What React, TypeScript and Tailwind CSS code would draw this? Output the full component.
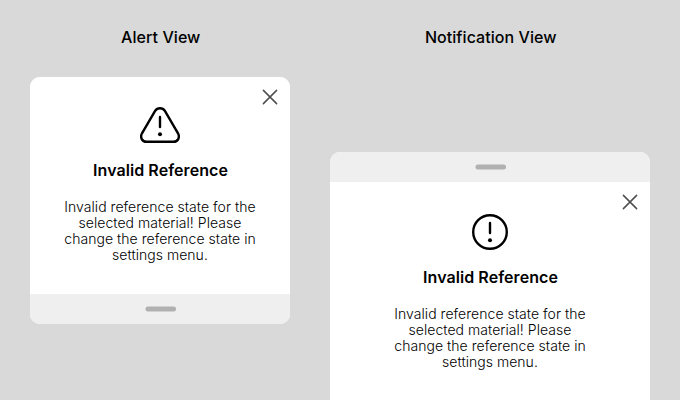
import React from "react";

function CloseIcon() {
  return (
    <svg width="16" height="16" viewBox="0 0 16 16" fill="none" stroke="#4d4d4d" strokeWidth="1.5" strokeLinecap="round">
      <path d="M1.4 1.4L14.6 14.6M14.6 1.4L1.4 14.6" />
    </svg>
  );
}

function WarningIcon() {
  return (
    <svg width="40" height="36" viewBox="0 0 40 36" fill="none" stroke="#000" strokeWidth="2.4" strokeLinecap="round">
      <path d="M15.1 3.9C17.4 0.3 22.6 0.3 24.9 3.9L38 26.3C40.1 30.4 38 34.8 33.5 34.8H6.5C2 34.8 -0.1 30.4 2 26.3Z" />
      <path d="M20 10V20" />
      <circle cx="20" cy="27.3" r="2" fill="#000" stroke="none" />
    </svg>
  );
}

function InfoIcon() {
  return (
    <svg width="36" height="36" viewBox="0 0 36 36" fill="none" stroke="#000" strokeWidth="2.4" strokeLinecap="round">
      <circle cx="18" cy="18" r="16.8" />
      <path d="M18 9V19" />
      <circle cx="18" cy="26.3" r="2" fill="#000" stroke="none" />
    </svg>
  );
}

function Handle() {
  return (
    <div className="flex h-[30px] items-center justify-center bg-[#efefef]">
      <svg width="32" height="6" viewBox="0 0 32 6" className="ml-px">
        <rect x="0.5" y="0.6" width="30.5" height="4.8" rx="2.2" fill="#b1b1b1" />
      </svg>
    </div>
  );
}

function Message({ icon }: { icon: React.ReactNode }) {
  return (
    <div className="relative flex flex-col items-center bg-white">
      <button className="absolute top-3 right-3" aria-label="Close">
        <CloseIcon />
      </button>
      {icon}
      <h2 className="mt-[17px] ml-[1px] text-base leading-5 font-semibold tracking-[0.06px]">Invalid Reference</h2>
      <p className="mt-[19px] text-center text-sm leading-4 font-light tracking-[0.04px]">
        Invalid reference state for the
        <br />
        selected material! Please
        <br />
        change the reference state in
        <br />
        settings menu.
      </p>
    </div>
  );
}

export default function App() {
  return (
    <main className="flex h-[400px] w-[680px] gap-10 overflow-hidden bg-[#d9d9d9] px-[30px] pt-[27px] font-['Inter','Liberation_Sans',sans-serif] text-black">
      <section className="w-[260px]">
        <h1 className="pl-[1.5px] text-center text-base leading-5 font-medium tracking-[0.06px]">Alert View</h1>
        <div className="mt-[30px] h-[247px] overflow-hidden rounded-[10px] bg-white">
          <div className="h-[217px]">
            <Message icon={<div className="mt-[30px]"><WarningIcon /></div>} />
          </div>
          <Handle />
        </div>
      </section>
      <section className="w-[320px]">
        <h1 className="pl-[1.5px] text-center text-base leading-5 font-medium tracking-[0.06px]">Notification View</h1>
        <div className="mt-[105px] h-[260px] overflow-hidden rounded-t-[10px] bg-white">
          <Handle />
          <Message icon={<div className="mt-8"><InfoIcon /></div>} />
        </div>
      </section>
    </main>
  );
}
